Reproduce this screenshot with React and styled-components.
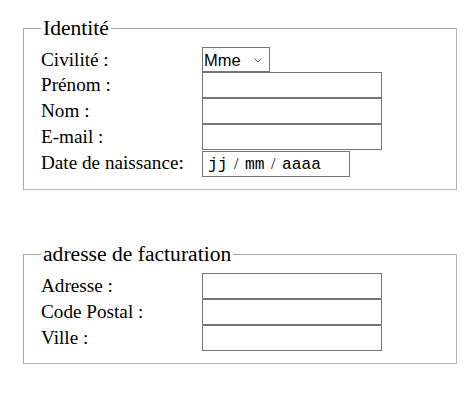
import styled, { createGlobalStyle } from 'styled-components'

const GlobalStyle = createGlobalStyle`
    body {
        margin: 0;
        background: #ffffff;
        color: #000000;
        font-family: "Liberation Serif", "Times New Roman", serif;
    }
`

const App = () => {
    return (
        <Page>
            <GlobalStyle />
            <FieldSet>
                <Legend>Identité</Legend>
                <Grid>
                    <Label>Civilité :</Label>
                    <SelectWrap>
                        <Select defaultValue="Mme">
                            <option>Mme</option>
                            <option>M.</option>
                        </Select>
                        <Chevron width="8" height="5" viewBox="0 0 8 5">
                            <polyline points="0.5,0.5 4,4 7.5,0.5" fill="none" stroke="#5a5a5a" strokeWidth="1" />
                        </Chevron>
                    </SelectWrap>
                    <Label>Prénom :</Label>
                    <Input type="text" />
                    <Label>Nom :</Label>
                    <Input type="text" />
                    <Label>E-mail :</Label>
                    <Input type="text" />
                    <Label $gap>Date de naissance:</Label>
                    <DateBox $gap>
                        <Seg>jj</Seg>
                        <Sep>/</Sep>
                        <Seg>mm</Seg>
                        <Sep>/</Sep>
                        <Seg>aaaa</Seg>
                    </DateBox>
                </Grid>
            </FieldSet>

            <FieldSet $spaced>
                <Legend>adresse de facturation</Legend>
                <Grid>
                    <Label>Adresse :</Label>
                    <Input type="text" />
                    <Label>Code Postal :</Label>
                    <Input type="text" />
                    <Label>Ville :</Label>
                    <Input type="text" />
                </Grid>
            </FieldSet>
        </Page>
    )
}

const Page = styled.div`
    padding: 16px 0 0 23px;
`

const FieldSet = styled.fieldset`
    box-sizing: border-box;
    width: 434px;
    margin: ${p => (p.$spaced ? '52px' : '0')} 0 0 0;
    padding: 6px 17px 12px 17px;
    border: 1px solid #a9a9a9;
    border-right-color: #b4b4b4;
    border-bottom-color: #b4b4b4;
    min-inline-size: 0;
`

const Legend = styled.legend`
    padding: 0 2px;
    font-size: 21.6px;
    line-height: normal;
`

const Grid = styled.div`
    display: grid;
    grid-template-columns: 161px auto;
    justify-content: start;
    align-items: baseline;
`

const Label = styled.span`
    font-size: 19.2px;
    line-height: normal;
    white-space: nowrap;
    margin-top: ${p => (p.$gap ? '1px' : '0')};
`

const Input = styled.input`
    box-sizing: border-box;
    width: 180px;
    height: 26px;
    margin: 0;
    padding: 1px 2px 0 2px;
    border: 1px solid #767676;
    border-radius: 0;
    background: #ffffff;
    font-family: "Liberation Sans", Arial, sans-serif;
    font-size: 16.5px;
    outline: none;
`

const SelectWrap = styled.div`
    position: relative;
    width: 68px;
    height: 25px;
`

const Select = styled.select`
    appearance: none;
    box-sizing: border-box;
    width: 68px;
    height: 25px;
    margin: 0;
    padding: 1px 18px 0 1px;
    border: 1px solid #767676;
    border-radius: 0;
    background: #ffffff;
    color: #000000;
    font-family: "Liberation Sans", Arial, sans-serif;
    font-size: 16.5px;
    outline: none;
`

const Chevron = styled.svg`
    position: absolute;
    left: 52px;
    top: 11px;
    pointer-events: none;
`

const DateBox = styled.div`
    box-sizing: border-box;
    display: flex;
    align-items: baseline;
    width: 148px;
    height: 26px;
    margin-top: ${p => (p.$gap ? '1px' : '0')};
    padding: 0 4px;
    border: 1px solid #767676;
    background: #ffffff;
    line-height: 24px;
`

const Seg = styled.span`
    padding: 0 1px;
    font-family: "Liberation Mono", "Courier New", monospace;
    font-size: 16.25px;
`

const Sep = styled.span`
    margin: 0 5.5px;
    font-family: "Liberation Serif", "Times New Roman", serif;
    font-size: 16px;
`

export default App
